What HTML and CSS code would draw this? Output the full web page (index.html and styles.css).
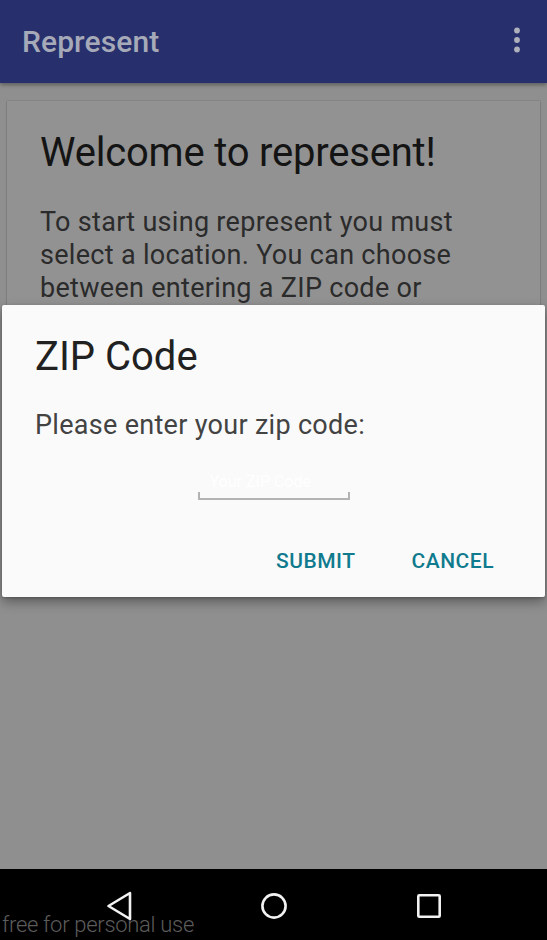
FILE: index.html
```html
<!DOCTYPE html>
<html lang="en">
<head>
<meta charset="utf-8">
<title>Represent</title>
<link rel="stylesheet" href="styles.css">
</head>
<body>
<div class="screen">
  <header class="appbar">
    <h1 class="appbar-title">Represent</h1>
    <button class="overflow" aria-label="More options">
      <svg width="8" height="26" viewBox="0 0 8 26"><circle cx="4" cy="3.5" r="2.9"/><circle cx="4" cy="13" r="2.9"/><circle cx="4" cy="22.5" r="2.9"/></svg>
    </button>
  </header>
  <main class="content">
    <section class="card">
      <h2 class="card-title">Welcome to represent!</h2>
      <p class="card-text">To start using represent you must select a location. You can choose between entering a ZIP code or using your current location.</p>
    </section>
  </main>
  <nav class="navbar">
    <svg class="nav-icon" width="26" height="30" viewBox="0 0 26 30"><path d="M24 2 L2.5 15 L24 28 Z" fill="none" stroke="#f2f2f2" stroke-width="2.6" stroke-linejoin="round"/></svg>
    <svg class="nav-icon" width="26" height="26" viewBox="0 0 26 26"><circle cx="13" cy="13" r="11.6" fill="none" stroke="#f2f2f2" stroke-width="2.6"/></svg>
    <svg class="nav-icon" width="26" height="26" viewBox="0 0 26 26"><rect x="2.3" y="2.3" width="21.4" height="21.4" rx="1" fill="none" stroke="#f2f2f2" stroke-width="2.6"/></svg>
  </nav>
  <div class="watermark">free for personal use</div>
  <div class="dialog" role="dialog">
    <h2 class="dialog-title">ZIP Code</h2>
    <p class="dialog-text">Please enter your zip code:</p>
    <div class="field-row">
      <input class="zip-input" type="text" placeholder="Your ZIP Code">
    </div>
    <div class="dialog-actions">
      <button class="action">SUBMIT</button>
      <button class="action">CANCEL</button>
    </div>
  </div>
</div>
</body>
</html>
```
FILE: styles.css
```css
* { box-sizing: border-box; }
html, body { margin: 0; padding: 0; }
body {
  width: 547px;
  height: 940px;
  overflow: hidden;
  font-family: Roboto, "Liberation Sans", sans-serif;
  background: #8f8f8f;
}
.screen {
  position: relative;
  width: 547px;
  height: 940px;
  display: flex;
  flex-direction: column;
}
.appbar {
  height: 83px;
  flex: 0 0 83px;
  background: #27306c;
  display: flex;
  align-items: center;
  justify-content: space-between;
  padding: 0 26px 0 22px;
  box-shadow: 0 2px 4px rgba(0,0,0,0.35);
  position: relative;
  z-index: 1;
}
.appbar-title {
  margin: 0;
  font-size: 30px;
  line-height: 36px;
  font-weight: 500;
  color: #a6a9b8;
  letter-spacing: 0.1px;
}
.overflow {
  border: 0;
  padding: 0;
  background: none;
  display: flex;
  margin-bottom: 3px;
}
.overflow svg { fill: #aeb0bc; }
.content {
  flex: 1;
  padding: 18px 7px 0 7px;
}
.card {
  background: #929292;
  box-shadow: 0 0 1px rgba(0,0,0,0.35), 0 1px 2px rgba(0,0,0,0.2);
  padding: 28px 20px 30px 33px;
}
.card-title {
  margin: 0;
  font-size: 40px;
  line-height: 48px;
  font-weight: 400;
  color: #141414;
  letter-spacing: -0.2px;
}
.card-text {
  margin: 29px 0 0 0;
  max-width: 432px;
  font-size: 27px;
  line-height: 33px;
  color: #2b2b2b;
  letter-spacing: 0.3px;
}
.navbar {
  flex: 0 0 71px;
  height: 71px;
  background: #000;
  display: flex;
  justify-content: center;
  align-items: center;
  gap: 129px;
  padding-top: 3px;
}
.nav-icon { display: block; }
.watermark {
  position: absolute;
  left: 2px;
  bottom: 3px;
  font-size: 22px;
  font-weight: 300;
  color: #5c5c5c;
  letter-spacing: -0.3px;
}
.dialog {
  position: absolute;
  top: 305px;
  left: 2px;
  width: 543px;
  height: 292px;
  background: #fafafa;
  border-radius: 2px;
  box-shadow: 0 5px 12px rgba(0,0,0,0.35), 0 1px 3px rgba(0,0,0,0.2);
  padding: 28px 0 0 33px;
}
.dialog-title {
  margin: 0;
  font-size: 40px;
  line-height: 48px;
  font-weight: 400;
  color: #212121;
}
.dialog-text {
  margin: 28px 0 0 0;
  font-size: 27px;
  line-height: 33px;
  color: #434343;
  letter-spacing: 0.3px;
}
.field-row {
  display: flex;
  justify-content: center;
  margin: 27px 0 0 -33px;
}
.zip-input {
  width: 152px;
  height: 31px;
  border: 0;
  border-bottom: 2px solid #b3b3b3;
  background:
    linear-gradient(#b3b3b3, #b3b3b3) left bottom / 2px 6px no-repeat,
    linear-gradient(#b3b3b3, #b3b3b3) right bottom / 2px 6px no-repeat;
  font-family: Roboto, "Liberation Sans", sans-serif;
  font-size: 16px;
  padding: 0 8px 5px 12px;
  outline: none;
  color: #333;
}
.zip-input::placeholder { color: #ffffff; }
.dialog-actions {
  display: flex;
  justify-content: flex-end;
  gap: 56px;
  margin-top: 49px;
  padding-right: 51px;
}
.action {
  border: 0;
  padding: 0;
  background: none;
  font-family: Roboto, "Liberation Sans", sans-serif;
  font-size: 21px;
  line-height: 24px;
  font-weight: 500;
  letter-spacing: 0.5px;
  color: #107b8e;
}
```
